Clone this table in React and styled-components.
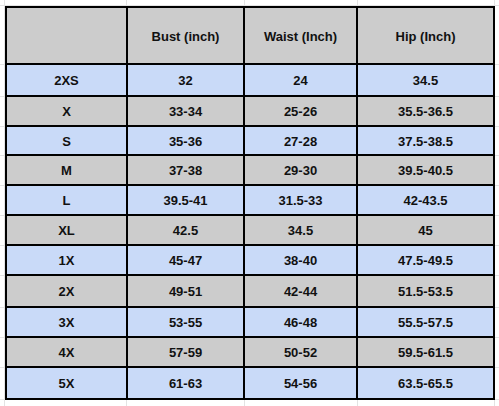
import React from "react";
import styled, { createGlobalStyle } from "styled-components";

const COLS = [121, 117, 113, 137];
const HEADER_H = 57;
const GRID_X = [4, 126, 244, 357, 494];
const GRID_Y = [5, 64, 96, 126, 155, 185, 215, 245, 275, 307, 337, 367, 399];

const rows = [
  { size: "2XS", bust: "32", waist: "24", hip: "34.5", h: 32 },
  { size: "X", bust: "33-34", waist: "25-26", hip: "35.5-36.5", h: 30 },
  { size: "S", bust: "35-36", waist: "27-28", hip: "37.5-38.5", h: 29 },
  { size: "M", bust: "37-38", waist: "29-30", hip: "39.5-40.5", h: 30 },
  { size: "L", bust: "39.5-41", waist: "31.5-33", hip: "42-43.5", h: 30 },
  { size: "XL", bust: "42.5", waist: "34.5", hip: "45", h: 30 },
  { size: "1X", bust: "45-47", waist: "38-40", hip: "47.5-49.5", h: 30 },
  { size: "2X", bust: "49-51", waist: "42-44", hip: "51.5-53.5", h: 32 },
  { size: "3X", bust: "53-55", waist: "46-48", hip: "55.5-57.5", h: 30 },
  { size: "4X", bust: "57-59", waist: "50-52", hip: "59.5-61.5", h: 30 },
  { size: "5X", bust: "61-63", waist: "54-56", hip: "63.5-65.5", h: 32 },
];

// faint spreadsheet gridlines behind the table
const gridLayers = [
  ...GRID_X.map(() => "linear-gradient(#e3e3e3, #e3e3e3)"),
  ...GRID_Y.map(() => "linear-gradient(#e3e3e3, #e3e3e3)"),
].join(", ");
const gridSizes = [
  ...GRID_X.map(() => "1px 100%"),
  ...GRID_Y.map(() => "100% 1px"),
].join(", ");
const gridPos = [
  ...GRID_X.map((x) => `${x}px 0`),
  ...GRID_Y.map((y) => `0 ${y}px`),
].join(", ");

const Global = createGlobalStyle`
  html, body {
    margin: 0;
    padding: 0;
    background: #fff;
  }
`;

const Sheet = styled.div`
  width: 499px;
  height: 406px;
  box-sizing: border-box;
  padding: 6px 0 0 5px;
  background-color: #fff;
  background-image: ${gridLayers};
  background-size: ${gridSizes};
  background-position: ${gridPos};
  background-repeat: no-repeat;
  font-family: Arial, "Liberation Sans", sans-serif;
`;

const Table = styled.div`
  display: grid;
  grid-template-columns: ${COLS.map((c) => `${c}px`).join(" ")};
  grid-template-rows: ${HEADER_H}px ${rows.map((r) => `${r.h}px`).join(" ")};
  width: max-content;
  border-left: 2px solid #000;
  border-top: 2px solid #000;
`;

const Cell = styled.div`
  box-sizing: border-box;
  display: flex;
  align-items: center;
  justify-content: center;
  border-right: 2px solid #000;
  border-bottom: 2px solid #000;
  background: ${(p) => (p.$blue ? "#c9daf8" : "#cccccc")};
  color: #111;
  font-size: 13px;
  font-weight: 700;
  padding-top: 1px;
`;

export default function App() {
  return (
    <>
      <Global />
      <Sheet>
        <Table>
          <Cell />
          <Cell>Bust (inch)</Cell>
          <Cell>Waist (Inch)</Cell>
          <Cell>Hip (Inch)</Cell>
          {rows.map((r, i) => {
            const blue = i % 2 === 0;
            return (
              <React.Fragment key={r.size}>
                <Cell $blue={blue}>{r.size}</Cell>
                <Cell $blue={blue}>{r.bust}</Cell>
                <Cell $blue={blue}>{r.waist}</Cell>
                <Cell $blue={blue}>{r.hip}</Cell>
              </React.Fragment>
            );
          })}
        </Table>
      </Sheet>
    </>
  );
}
